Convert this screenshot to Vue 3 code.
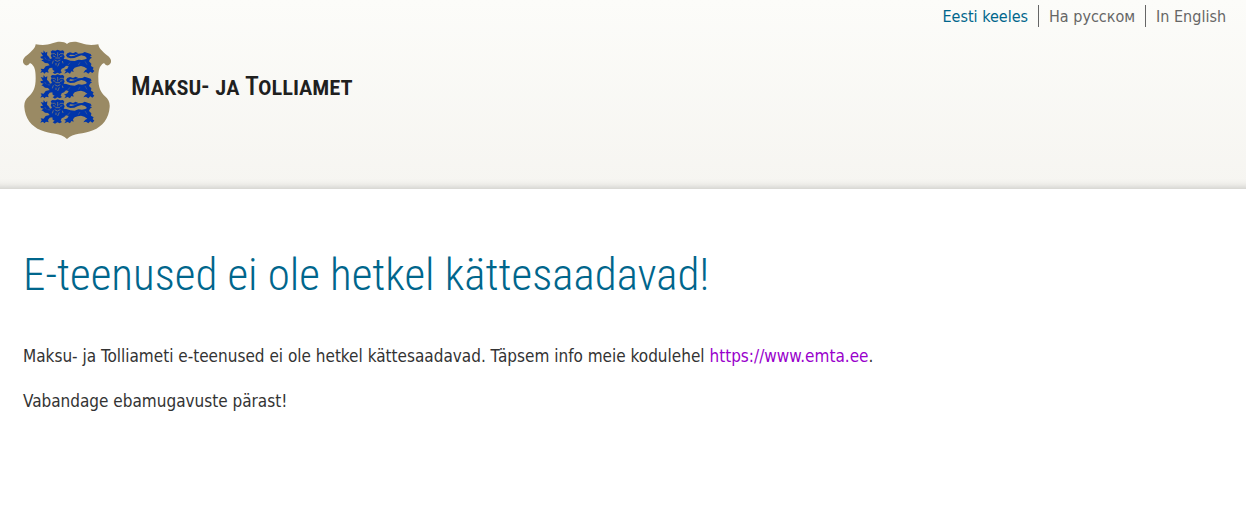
<script setup>
const languages = [
  { label: 'Eesti keeles', code: 'et', active: true },
  { label: 'На русском', code: 'ru', active: false },
  { label: 'In English', code: 'en', active: false },
]
const lionOffsets = [0, 74, 149]
</script>

<template>
  <div class="page">
    <header class="header">
      <nav class="languages" aria-label="Keel">
        <a
          v-for="language in languages"
          :key="language.code"
          :href="'#' + language.code"
          :lang="language.code"
          :class="['language', { active: language.active }]"
        >{{ language.label }}</a>
      </nav>
      <a class="brand" href="#">
        <svg class="crest" viewBox="24 18 264 297" aria-hidden="true">
          <path
            fill="#9a8a64"
            d="M156 27C148 19 128 18 112 25C96 31 80 31 62 28C61 39 51 48 36 61C25 69 22 76 25 84C29 92 38 94 42 87C44 83 48 84 52 89C61 98 62 113 62 130C62 158 55 172 42 184C32 193 27 202 28 216C30 250 49 274 78 286C106 298 138 294 156 312C174 294 206 298 234 286C263 274 282 250 284 216C285 202 280 193 270 184C257 172 250 158 250 130C250 113 251 98 260 89C264 84 268 83 270 87C274 94 283 92 287 84C290 76 287 69 276 61C261 48 251 39 250 28C232 31 216 31 200 25C184 18 164 19 156 27Z"
          />
          <g v-for="offset in lionOffsets" :key="offset" :transform="`translate(0 ${offset})`">
            <path
              fill="#0035a9"
              d="M77 52L85 54L86 46L91 53L97 50L96 60L102 66L105 72L111 70L107 62L110 56L107 50L112 46L121 47L128 44L136 47L144 46L148 51L145 57L149 65L146 72L154 73L166 77L179 78L190 74L201 75L211 73L216 70L210 64L199 61L187 65L178 69L166 70L157 67L153 61L157 55L165 52L174 55L182 51L190 55L179 60L166 59L162 62L168 64L178 62L190 56L202 55L209 51L218 54L227 57L230 63L224 64L231 68L225 72L222 79L229 86L228 93L236 98L233 103L238 108L232 114L226 110L220 116L213 111L205 113L211 105L217 102L208 96L198 93L188 95L179 98L174 104L176 111L169 109L165 116L158 112L148 116L153 108L147 105L157 101L161 94L153 92L147 98L140 101L137 108L141 112L134 116L127 113L120 117L113 113L119 108L113 105L112 98L104 99L99 106L101 113L93 111L88 116L84 111L76 114L80 107L77 101L86 102L92 94L104 91L99 85L90 84L84 79L79 77L86 72L78 70L76 65L84 63Z"
            />
            <g fill="none" stroke="#9a8a64" stroke-width="2">
              <path d="M112 56H119L123 60M144 56H136L132 60M114 63L121 65M142 63L135 65M128 52V65M121 69H135M119 75L127 79L136 75M123 84V91M133 83L128 94M115 77L112 86M142 78L144 85" />
              <path d="M165 83L158 91M195 82L190 90M210 79L216 89M106 76L98 75M89 67L94 74" stroke-width="1" />
            </g>
          </g>
        </svg>
        <span class="brand-name">Maksu- ja Tolliamet</span>
      </a>
    </header>
    <main class="content">
      <h1>E-teenused ei ole hetkel kättesaadavad!</h1>
      <p>
        Maksu- ja Tolliameti e-teenused ei ole hetkel kättesaadavad. Täpsem info meie kodulehel
        <a href="https://www.emta.ee">https://www.emta.ee</a>.
      </p>
      <p>Vabandage ebamugavuste pärast!</p>
    </main>
  </div>
</template>

<style>
body {
  margin: 0;
  background: #fff;
}
</style>

<style scoped>
.page {
  font-family: Tahoma, "DejaVu Sans Condensed", "Noto Sans", sans-serif;
  font-size: 17px;
  line-height: 24px;
  color: #333;
}

.header {
  display: flex;
  flex-direction: column;
  min-height: 189px;
  background: linear-gradient(#fcfcf9, #f6f5f1);
  box-shadow: inset 0 -10px 10px -10px rgba(0, 0, 0, 0.25);
}

.languages {
  display: flex;
  justify-content: flex-end;
  padding: 5px 10px 0 0;
}

.language {
  padding: 2px 10px 0;
  font-size: 16px;
  line-height: 20px;
  color: #666;
  text-decoration: none;
}

.language + .language {
  border-left: 1px solid #666;
}

.language.active {
  color: #00668c;
}

.brand {
  display: flex;
  align-items: center;
  align-self: flex-start;
  gap: 20px;
  margin: 14px 23px 0;
  color: #20201e;
  text-decoration: none;
}

.crest {
  width: 88px;
  height: 99px;
}

.brand-name {
  padding-bottom: 10px;
  font-family: "Roboto Condensed", Roboto, sans-serif;
  font-size: 26px;
  font-variant: small-caps;
  font-weight: 500;
}

.content {
  padding: 56px 23px;
}

h1 {
  margin: 0 0 39px;
  font-family: "Roboto Condensed", Roboto, sans-serif;
  font-size: 45px;
  font-weight: 300;
  line-height: 60px;
  color: #00668c;
}

p {
  margin: 0 0 21px;
}

p a {
  color: #90c;
  text-decoration: none;
}
</style>
